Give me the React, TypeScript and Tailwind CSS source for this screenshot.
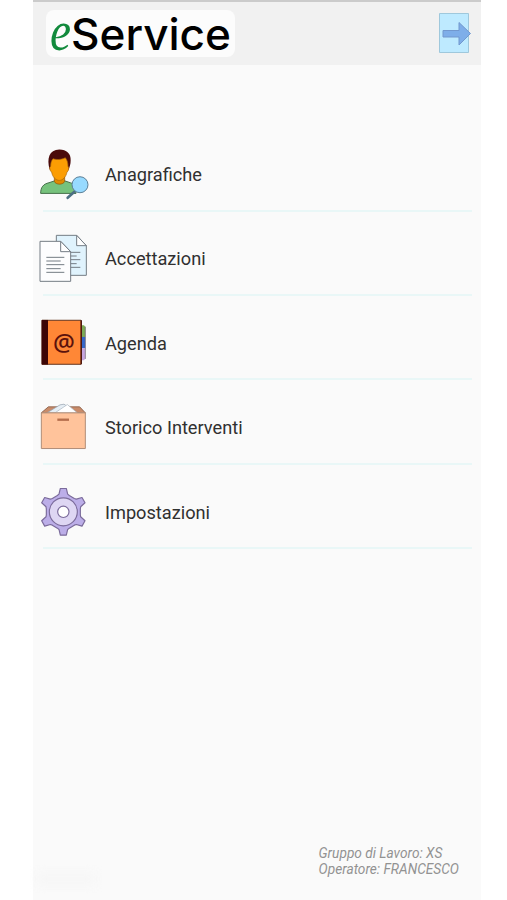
import type { ReactNode } from "react";

function PersonIcon() {
  return (
    <svg viewBox="9 1.8 201 210" className="h-[70px] w-[67px] shrink-0">
      <path d="M32 159c0-19 8-28 25-32l18-6h28l18 6c11 3 17 13 17 32z" fill="#76c27c" stroke="#47704b" strokeWidth="3" />
      <path d="M73 108h31v15c-4 11-27 11-31 0z" fill="#e08a00" stroke="#8a5208" strokeWidth="2" />
      <path d="M59 87C50 54 57 28 88 27c22 0 35 12 34 33 0 11-3 20-7 29z" fill="#4a0a0a" />
      <path d="M62 78c-5 1-2 15 3 17 2 15 13 25 23 25s20-10 23-25c5-2 7-16 3-17 0-12-3-20-8-26-13 7-29 6-37 3-5 6-7 13-7 23z" fill="#fb9d03" stroke="#a8650a" strokeWidth="2" />
      <path d="m134 153-21 19" stroke="#4c6f83" strokeWidth="8" strokeLinecap="round" />
      <circle cx="150" cy="133" r="24" fill="#97daff" stroke="#5c7f96" strokeWidth="3" />
    </svg>
  );
}

function DocumentsIcon() {
  return (
    <svg viewBox="9 0 201 210" className="h-[70px] w-[67px] shrink-0">
      <g stroke="#747c84" strokeWidth="3" strokeLinejoin="round">
        <path d="M79 31h61l29 31v89H79z" fill="#e0f3fd" />
        <path d="M140 31v31h29z" fill="#fff" />
        <path d="M112 82h39m-39 11h28m-28 11h39m-39 12h28m-28 11h39" />
        <path d="M30 49h62l30 31v89H30z" fill="#fdfdfe" />
        <path d="M92 49v31h30z" fill="#fff" />
        <path d="M49 97h54m-54 11h43m-43 11h54m-54 12h43m-43 11h54" />
      </g>
    </svg>
  );
}

function AgendaIcon() {
  return (
    <svg viewBox="9 -1.8 201 210" className="h-[70px] w-[67px] shrink-0">
      <path d="M150 47h12l4 5v30h-16z" fill="#7cab55" />
      <path d="M150 82h16v34h-16z" fill="#3567c9" />
      <path d="M150 116h16v31l-4 5h-12z" fill="#c6a5df" />
      <path d="M166 51v97" stroke="#665b65" strokeWidth="2" />
      <path d="M36 32h117v132H36z" fill="#ff8736" stroke="#65351d" strokeWidth="3" />
      <path d="M35 31h19v134H35z" fill="#3c0505" />
      <path d="M154 32v132" stroke="#4d1710" strokeWidth="4" />
      <text x="102" y="124" textAnchor="middle" className="fill-[#5c120c] font-['Noto_Sans'] text-[73px] font-medium">@</text>
    </svg>
  );
}

function BoxIcon() {
  return (
    <svg viewBox="9 -3.6 201 210" className="h-[70px] w-[67px] shrink-0">
      <path d="M34 53 55 35h94l17 18z" fill="#c98b69" stroke="#956b55" strokeWidth="3" />
      <path d="m51 53 39-24 12-2 38 26z" fill="#e6eef5" stroke="#8d9aa8" strokeWidth="2" />
      <path d="m75 53 37-25 30 25z" fill="#fff" stroke="#a6b2be" strokeWidth="2" />
      <path d="M34 53h132v107H34z" fill="#ffc39b" stroke="#b08d78" strokeWidth="3" />
      <path d="M82 70h35v7H82z" fill="#b56d4b" />
    </svg>
  );
}

function GearIcon() {
  return (
    <svg viewBox="9 -5.4 201 210" className="h-[70px] w-[67px] shrink-0">
      <g stroke="#7b6b9b" strokeWidth="3.5" strokeLinejoin="round">
        <path
          d="M118 47 133 56 139 58 156 53 165 69 152 81 151 87V105L152 111 165 123 156 139 139 134 133 136 118 145 113 149 109 166H91L87 149 82 145 67 136 61 134 44 139 35 123 48 111 49 105V87L48 81 35 69 44 53 61 58 67 56 82 47 87 43 91 26H109L113 43z"
          fill="#bcaee8"
        />
        <circle cx="100" cy="96" r="42" fill="#ded6f3" />
        <circle cx="100" cy="96" r="17" fill="#fff" />
      </g>
    </svg>
  );
}

function Logo() {
  return (
    <div className="flex h-[47px] w-[189px] items-center rounded-lg bg-[#fcfcfc] pl-[4px]">
      <svg viewBox="0 0 21 70" className="h-[70px] w-[21px] shrink-0" aria-hidden="true">
        <text x="0" y="51" textLength="21" lengthAdjust="spacingAndGlyphs" className="fill-[#118a3c] font-['Liberation_Serif'] text-[57px] italic">e</text>
      </svg>
      <svg viewBox="0 0 162 70" className="h-[70px] w-[162px] shrink-0" aria-hidden="true">
        <text x="0" y="51" textLength="160" lengthAdjust="spacingAndGlyphs" className="fill-black font-['Inter'] text-[44px] font-medium">Service</text>
      </svg>
    </div>
  );
}

function MenuRow({ icon, label }: { icon: ReactNode; label: string }) {
  return (
    <li className="h-[84.4px]">
      <button className="flex h-[83px] w-full items-start pt-[14px] text-left">
        {icon}
        <span className="ml-[5px] mt-[20.500px] text-[18.2px] leading-7 text-[#303030]">{label}</span>
      </button>
      <div className="ml-[10px] mr-[9px] h-[2px] bg-[#e9f7f7]" />
    </li>
  );
}

export default function App() {
  return (
    <div className="h-[900px] bg-white pl-[33px] font-['Roboto',sans-serif]">
      <main className="flex h-full w-[448px] flex-col bg-[#fafafa]">
        <header className="flex h-[65px] items-start justify-between border-t-2 border-[#cbcbcb] bg-[#f1f1f1]">
          <div className="ml-[13px] mt-[8px]">
            <Logo />
          </div>
          <button className="mr-[9px] mt-[10px]" aria-label="Esci">
            <svg viewBox="0 0 34 42" className="h-[42px] w-[34px]">
              <path d="M1.5 1.5h29v39h-29z" fill="#beeaff" stroke="#9fc8dc" />
              <path d="M5 18.500h16V10.500l11.500 11L21 33v-8H5z" fill="#7eaee9" stroke="#7298ce" />
            </svg>
          </button>
        </header>
        <ul className="mt-[61.600px]">
          <MenuRow icon={<PersonIcon />} label="Anagrafiche" />
          <MenuRow icon={<DocumentsIcon />} label="Accettazioni" />
          <MenuRow icon={<AgendaIcon />} label="Agenda" />
          <MenuRow icon={<BoxIcon />} label="Storico Interventi" />
          <MenuRow icon={<GearIcon />} label="Impostazioni" />
        </ul>
        <footer className="mb-[23px] mt-auto flex items-end justify-between">
          <div className="mb-[-8px] ml-[4px] h-[12px] w-[58px] bg-[#f6f6f6] blur-[5px]" />
          <div className="mr-[22px] text-[13.7px] leading-4 text-[#929292] italic">
            <p>Gruppo di Lavoro: XS</p>
            <p>Operatore: FRANCESCO</p>
          </div>
        </footer>
      </main>
    </div>
  );
}
